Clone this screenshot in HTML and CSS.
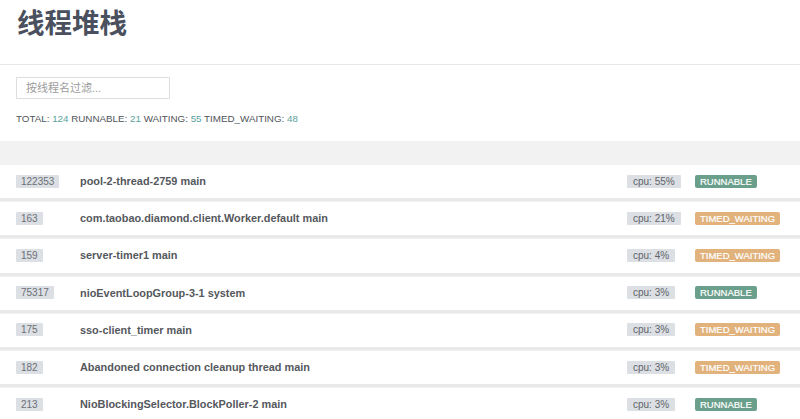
FILE: index.html
```html
<!DOCTYPE html>
<html lang="zh">
<head>
<meta charset="utf-8">
<title>线程堆栈</title>
<link rel="stylesheet" href="styles.css">
</head>
<body>
<header class="page-head">
  <h1 class="title">线程堆栈</h1>
</header>
<section class="panel">
  <input class="filter" type="text" placeholder="按线程名过滤...">
  <p class="stats">TOTAL: <span class="num">124</span> RUNNABLE: <span class="num">21</span> WAITING: <span class="num">55</span> TIMED_WAITING: <span class="num">48</span></p>
</section>
<div class="band"></div>
<ul class="threads">
  <li class="row"><span class="tid">122353</span><span class="name">pool-2-thread-2759 main</span><span class="cpu">cpu: 55%</span><span class="state runnable">RUNNABLE</span></li>
  <li class="row"><span class="tid">163</span><span class="name">com.taobao.diamond.client.Worker.default main</span><span class="cpu">cpu: 21%</span><span class="state timed">TIMED_WAITING</span></li>
  <li class="row"><span class="tid">159</span><span class="name">server-timer1 main</span><span class="cpu">cpu: 4%</span><span class="state timed">TIMED_WAITING</span></li>
  <li class="row"><span class="tid">75317</span><span class="name">nioEventLoopGroup-3-1 system</span><span class="cpu">cpu: 3%</span><span class="state runnable">RUNNABLE</span></li>
  <li class="row"><span class="tid">175</span><span class="name">sso-client_timer main</span><span class="cpu">cpu: 3%</span><span class="state timed">TIMED_WAITING</span></li>
  <li class="row"><span class="tid">182</span><span class="name">Abandoned connection cleanup thread main</span><span class="cpu">cpu: 3%</span><span class="state timed">TIMED_WAITING</span></li>
  <li class="row"><span class="tid">213</span><span class="name">NioBlockingSelector.BlockPoller-2 main</span><span class="cpu">cpu: 3%</span><span class="state runnable">RUNNABLE</span></li>
</ul>
</body>
</html>
```
FILE: styles.css
```css
* { box-sizing: border-box; }
html, body {
  margin: 0;
  padding: 0;
  background: #ffffff;
  font-family: "Liberation Sans", Arial, "Noto Sans CJK SC", sans-serif;
  overflow: hidden;
}
.page-head {
  height: 64px;
  padding: 3px 0 0 17px;
}
.title {
  margin: 0;
  font-family: "Noto Sans CJK SC", sans-serif;
  font-size: 27.5px;
  line-height: 36px;
  font-weight: 700;
  color: #4a505d;
}
.panel {
  border-top: 1px solid #e6e6e6;
  padding: 12px 16px 0 16px;
  height: 77px;
}
.filter {
  display: block;
  width: 154px;
  height: 22px;
  margin: 0;
  border: 1px solid #dedede;
  border-radius: 0;
  padding: 0 9px;
  font-family: "Liberation Sans", "Noto Sans CJK SC", sans-serif;
  font-size: 11px;
  color: #555;
  outline: none;
}
.filter::placeholder { color: #9c9c9c; }
.stats {
  margin: 14px 0 0 0;
  font-size: 9.8px;
  line-height: 12px;
  color: #50555b;
}
.num { color: #5aa19b; }
.band {
  height: 23px;
  background: #f2f2f2;
}
.threads {
  list-style: none;
  margin: 0;
  padding: 0;
  background: #e9e9e9;
  display: flex;
  flex-direction: column;
  gap: 3px;
}
.row {
  height: 34.2px;
  background: #ffffff;
  display: grid;
  grid-template-columns: 64px 1fr 68px 89px;
  align-items: center;
  padding: 0 16px;
  box-shadow: inset 0 1px 0 #f1f1f1;
}
.tid {
  justify-self: start;
  background: #dcdfe3;
  color: #6b6f75;
  font-size: 10px;
  line-height: 13px;
  padding: 0 5px;
  border-radius: 1px;
}
.name {
  font-size: 10.9px;
  font-weight: 700;
  color: #55585d;
  white-space: nowrap;
}
.cpu {
  justify-self: start;
  background: #dcdfe3;
  color: #60646a;
  font-size: 10px;
  line-height: 13px;
  padding: 0 6px;
  border-radius: 1px;
}
.state {
  justify-self: start;
  color: #ffffff;
  font-size: 9.5px;
  line-height: 13px;
  padding: 0 5px;
  border-radius: 2px;
  -webkit-text-stroke: 0.2px #ffffff;
}
.runnable { background: #6a9f8b; }
.timed { background: #e1b27c; }
```
